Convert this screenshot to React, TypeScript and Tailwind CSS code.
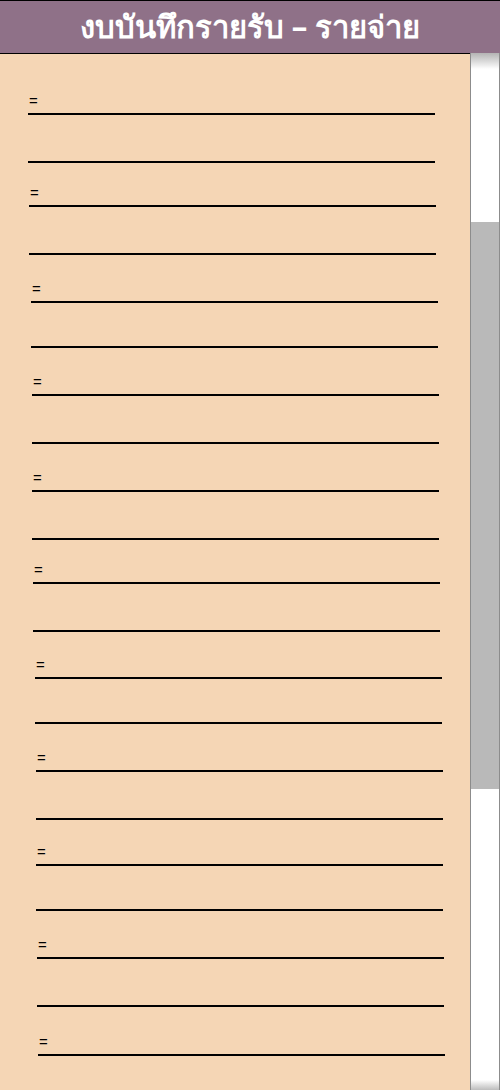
import React from 'react';

// line positions read off the sheet: row height, left offset, whether it carries the "=" label
const rows = [
  { h: 'h-[61px]', ml: 'ml-[28px]', eq: true },
  { h: 'h-[48px]', ml: 'ml-[28px]', eq: false },
  { h: 'h-[44px]', ml: 'ml-[29px]', eq: true },
  { h: 'h-[48px]', ml: 'ml-[29px]', eq: false },
  { h: 'h-[48px]', ml: 'ml-[31px]', eq: true },
  { h: 'h-[45px]', ml: 'ml-[31px]', eq: false },
  { h: 'h-[48px]', ml: 'ml-[32px]', eq: true },
  { h: 'h-[48px]', ml: 'ml-[32px]', eq: false },
  { h: 'h-[48px]', ml: 'ml-[32px]', eq: true },
  { h: 'h-[48px]', ml: 'ml-[32px]', eq: false },
  { h: 'h-[44px]', ml: 'ml-[33px]', eq: true },
  { h: 'h-[48px]', ml: 'ml-[33px]', eq: false },
  { h: 'h-[47px]', ml: 'ml-[35px]', eq: true },
  { h: 'h-[45px]', ml: 'ml-[35px]', eq: false },
  { h: 'h-[48px]', ml: 'ml-[36px]', eq: true },
  { h: 'h-[48px]', ml: 'ml-[36px]', eq: false },
  { h: 'h-[46px]', ml: 'ml-[36px]', eq: true },
  { h: 'h-[45px]', ml: 'ml-[36px]', eq: false },
  { h: 'h-[48px]', ml: 'ml-[37px]', eq: true },
  { h: 'h-[48px]', ml: 'ml-[37px]', eq: false },
  { h: 'h-[49px]', ml: 'ml-[38px]', eq: true },
];

export default function App() {
  return (
    <div className="w-[500px] h-[1090px] flex flex-col overflow-hidden bg-[#f5d6b5] font-['Liberation_Sans',sans-serif]">
      <header className="h-[53px] shrink-0 border-t border-black bg-[#8f7188] flex items-center justify-center">
        <h1 className="text-white font-bold text-[31px] leading-none pb-[2px] font-['Noto_Sans','DejaVu_Sans',sans-serif]">
          งบบันทึกรายรับ – รายจ่าย
        </h1>
      </header>

      <div className="flex flex-1 min-h-0">
        <main className="w-[470px] border-t border-black bg-[#f5d6b5]">
          {rows.map((r, i) => (
            <div
              key={i}
              className={`${r.h} ${r.ml} w-[407px] border-b-2 border-black flex items-end`}
            >
              {r.eq && (
                <span className="ml-[1px] mb-[5px] text-[15px] leading-none text-black">=</span>
              )}
            </div>
          ))}
        </main>

        <div className="w-[30px] flex flex-col border-l border-r border-[#8c8c8c] bg-white">
          <div className="h-[16px] shrink-0 bg-gradient-to-b from-[#b4b4b4] to-white" />
          <div className="h-[153px] shrink-0" />
          <div className="h-[567px] shrink-0 bg-[#b9b9b9]" />
          <div className="flex-1" />
          <div className="h-[10px] shrink-0 bg-gradient-to-b from-white to-[#bdbdbd]" />
        </div>
      </div>
    </div>
  );
}
